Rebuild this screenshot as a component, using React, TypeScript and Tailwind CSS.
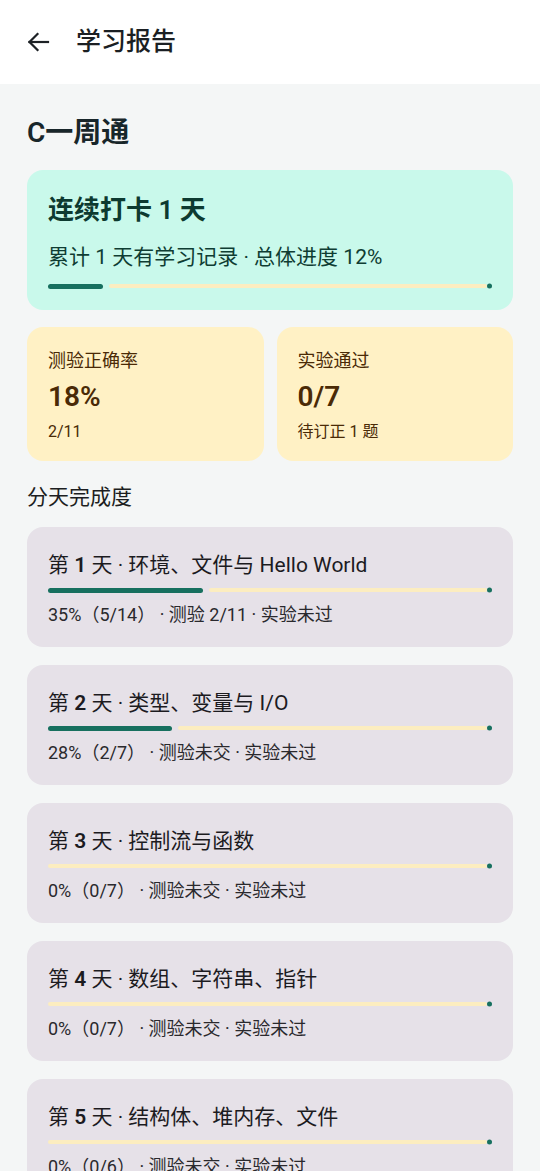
import React from "react";

const font = { fontFamily: 'Roboto, "Noto Sans CJK SC", "Noto Sans", sans-serif' };

function Progress({ pct }: { pct: number }) {
  return (
    <div className="relative flex h-[6px] w-full items-center">
      {pct > 0 && (
        <div className="h-[5px] rounded-full bg-[#17705f] mr-[6px]" style={{ width: `${pct}%` }} />
      )}
      <div className="h-[4px] flex-1 rounded-full bg-[#fcedc0] mr-[5px]" />
      <div className="absolute right-0 top-1/2 h-[5px] w-[5px] -translate-y-1/2 rounded-full bg-[#17705f]" />
    </div>
  );
}

const days = [
  { n: "1", t: "环境、文件与 Hello World", pct: 35, sub: "35%（5/14） · 测验 2/11 · 实验未过" },
  { n: "2", t: "类型、变量与 I/O", pct: 28, sub: "28%（2/7） · 测验未交 · 实验未过" },
  { n: "3", t: "控制流与函数", pct: 0, sub: "0%（0/7） · 测验未交 · 实验未过" },
  { n: "4", t: "数组、字符串、指针", pct: 0, sub: "0%（0/7） · 测验未交 · 实验未过" },
  { n: "5", t: "结构体、堆内存、文件", pct: 0, sub: "0%（0/6） · 测验未交 · 实验未过" },
];

export default function App() {
  return (
    <div className="h-[1171px] w-[540px] overflow-hidden bg-[#f4f6f6]" style={font}>
      <div className="flex h-[84px] items-center bg-white px-[27px]">
        <svg width="23" height="20" viewBox="0 0 23 20" fill="none" stroke="#1d2125" strokeWidth="2.2" strokeLinecap="square">
          <path d="M21 10H2.5" />
          <path d="M10.5 2L2.5 10L10.5 18" strokeLinejoin="miter" />
        </svg>
        <div className="ml-[26px] text-[25px] leading-[32px] font-medium text-[#1b1f23]">学习报告</div>
      </div>
      <div className="px-[27px] pt-[31px]">
        <div className="text-[28px] leading-[36px] font-semibold text-[#18262a]">C一周通</div>
        <div className="mt-[19px] rounded-[16px] bg-[#c9f9eb] px-[21px] pt-[24px] pb-[21px]">
          <div className="text-[26px] leading-[32px] font-semibold text-[#0d3a30]">连续打卡 1 天</div>
          <div className="mt-[17px] text-[21px] leading-[28px] text-[#0f3d33]">累计 1 天有学习记录 · 总体进度 12%</div>
          <div className="mt-[12px]">
            <Progress pct={12.4} />
          </div>
        </div>
        <div className="mt-[17px] grid grid-cols-2 gap-[13px]">
          {[
            { l: "测验正确率", v: "18%", s: "2/11" },
            { l: "实验通过", v: "0/7", s: "待订正 1 题" },
          ].map((c) => (
            <div key={c.l} className="rounded-[16px] bg-[#fff1c5] px-[21px] pt-[22px] pb-[18px] text-[#4a2a06]">
              <div className="text-[18px] leading-[24px]">{c.l}</div>
              <div className="mt-[7px] text-[28px] leading-[34px] font-semibold">{c.v}</div>
              <div className="mt-[7px] text-[16px] leading-[22px]">{c.s}</div>
            </div>
          ))}
        </div>
        <div className="mt-[22px] text-[21px] leading-[28px] text-[#1c1e21]">分天完成度</div>
        <div className="mt-[16px] flex flex-col gap-[18px]">
          {days.map((d) => (
            <div key={d.n} className="rounded-[16px] bg-[#e6e1e8] px-[21px] pt-[24px] pb-[20px] text-[#1c1b1f]">
              <div className="text-[21px] leading-[28px]">
                第 <span className="font-semibold">{d.n}</span> 天 · {d.t}
              </div>
              <div className="mt-[8px]">
                <Progress pct={d.pct} />
              </div>
              <div className="mt-[10px] text-[18px] leading-[24px] text-[#2a292d]">{d.sub}</div>
            </div>
          ))}
        </div>
      </div>
    </div>
  );
}
